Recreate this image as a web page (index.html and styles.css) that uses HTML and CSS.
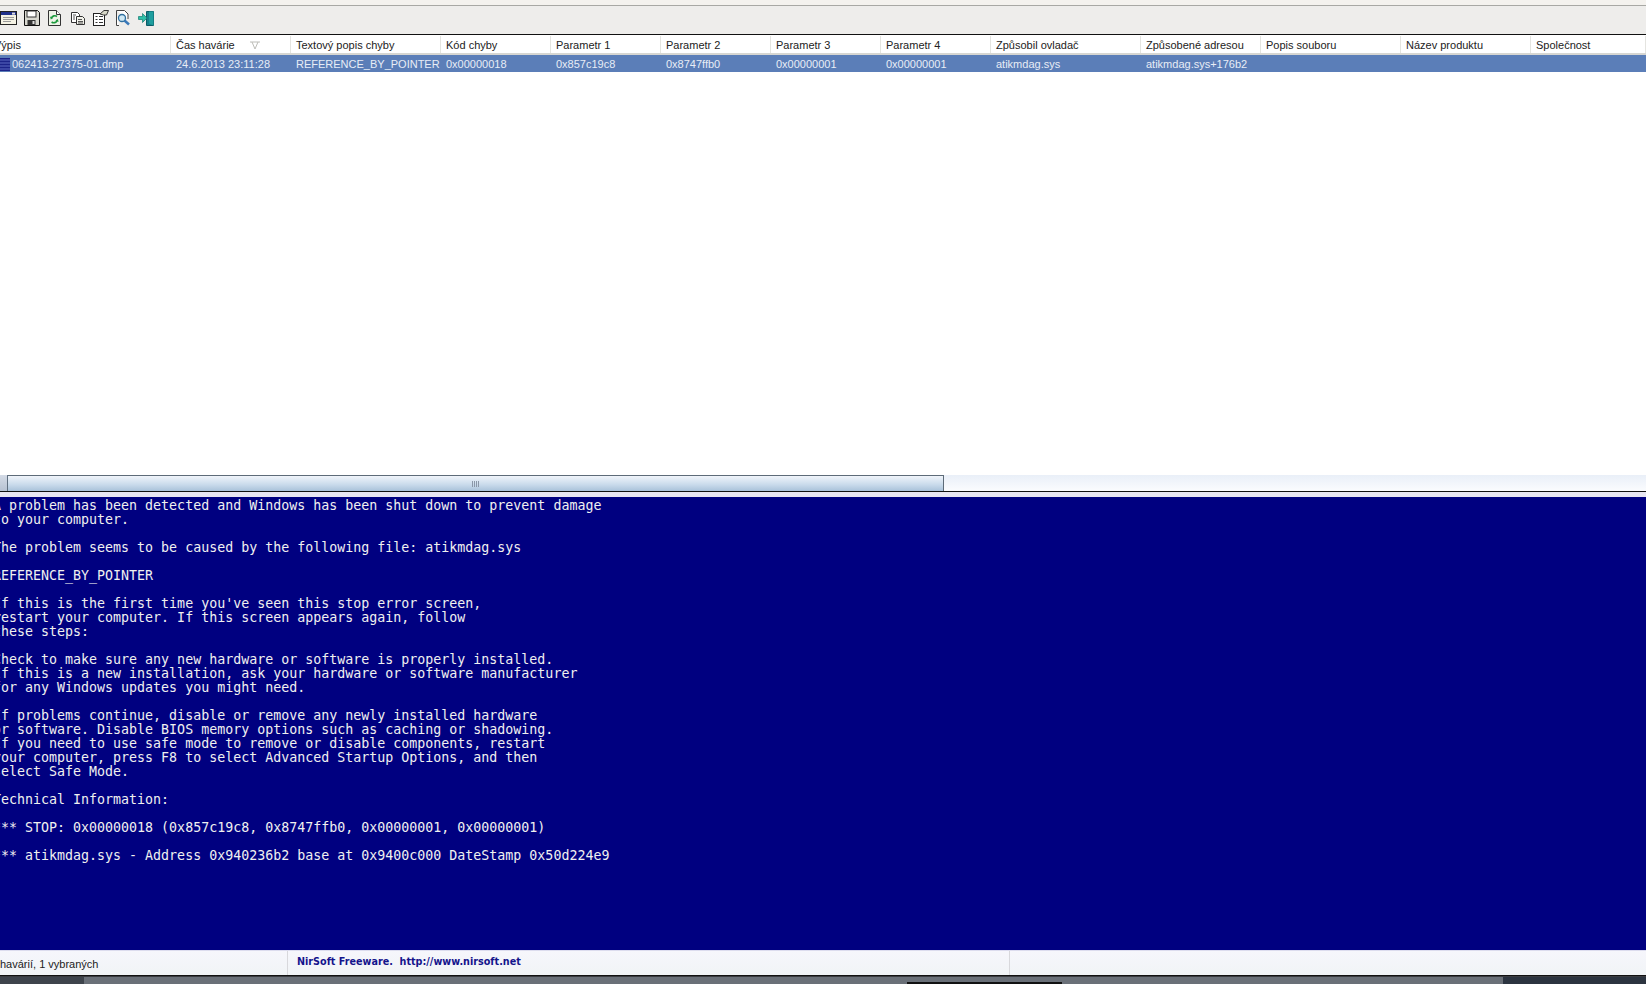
FILE: index.html
```html
<!DOCTYPE html>
<html lang="cs">
<head>
<meta charset="utf-8">
<title>BlueScreenView</title>
<link rel="stylesheet" href="styles.css">
</head>
<body>
<div class="app">
  <div class="menu-strip"></div>
  <div class="toolbar">
    <svg class="tool" viewBox="0 0 17 16"><rect x="0.5" y="1.5" width="16" height="13" fill="#f4f2e4" stroke="#222"/><rect x="1" y="2" width="15" height="3" fill="#20308a"/><rect x="12" y="2.6" width="3" height="2" fill="#ddd"/><path d="M3 7.5h11M3 9.5h11M3 11.5h8" stroke="#999" stroke-width="1"/></svg>
    <svg class="tool" viewBox="0 0 17 16"><path d="M1.5 0.500h13l2 2v13h-15z" fill="#d8d8d0" stroke="#111"/><rect x="4" y="1" width="9" height="6" fill="#fff" stroke="#333"/><rect x="4.500" y="10" width="8" height="5" fill="#333"/><rect x="9.500" y="11" width="2" height="3" fill="#ddd"/></svg>
    <svg class="tool" viewBox="0 0 17 16"><path d="M2.500 0.500h8l4 4v11h-12z" fill="#eef4e8" stroke="#333"/><path d="M10.500 .5v4h4" fill="#fff" stroke="#333"/><path d="M11 6.500a3.600 3.600 0 0 0-5.600 1.600M5.600 12a3.600 3.600 0 0 0 5.600-1.600" fill="none" stroke="#1c9a3c" stroke-width="1.600"/><path d="M4 6.500l.8 3 2.400-1.600zM12.600 12l-.8-3-2.400 1.600z" fill="#1c9a3c"/></svg>
    <svg class="tool" viewBox="0 0 17 16"><path d="M2.500 2.500h6l2 2v8h-8z" fill="#fff" stroke="#333"/><path d="M7.500 6.500h6l2 2v6h-8z" fill="#f2f2ea" stroke="#333"/><path d="M4 5h3M4 7h2M4 9h2M9 9.500h4M9 11.500h5M9 13h5" stroke="#555"/></svg>
    <svg class="tool" viewBox="0 0 17 16"><rect x="1.500" y="3.500" width="11" height="12" fill="#fff" stroke="#222"/><path d="M3.500 6.500h2M7 6.500h4M3.500 9.500h2M7 9.500h4M3.500 12.500h2M7 12.500h4" stroke="#333"/><path d="M8 4l4-3.500h4.500l-2 4.500h-3z" fill="#d8d8c8" stroke="#333"/></svg>
    <svg class="tool" viewBox="0 0 17 16"><path d="M1.500 0.500h8l3.500 3.500v5M4 15.500H1.500v-15" fill="#fff" stroke="#444"/><circle cx="7" cy="8" r="3.500" fill="#cfe8f4" stroke="#2f6f9f" stroke-width="1.300"/><path d="M9.500 10.500l4.500 4" stroke="#3a78b8" stroke-width="2.500"/></svg>
    <svg class="tool" viewBox="0 0 17 16"><path d="M8.500 1.500h7v14h-7z" fill="#16808a" stroke="#0d5c66"/><path d="M11 1.500l4.500 0v14l-4.500-2z" fill="#1f9f9f"/><path d="M0.500 6.500h4v-3l4.500 4.500-4.500 4.500v-3h-4z" fill="#2ec0a8" stroke="#147a70" stroke-width=".7"/></svg>
  </div>

  <section class="list">
    <div class="list-head">
      <div class="head-cell first"><span class="head-clip">Výpis</span></div>
      <div class="head-cell sorted">Čas havárie<svg class="sort" viewBox="0 0 10 9"><path d="M0 1h10M2 1l3 7M8 1L5 8" fill="none" stroke="#bdbdb8"/></svg></div>
      <div class="head-cell">Textový popis chyby</div>
      <div class="head-cell">Kód chyby</div>
      <div class="head-cell">Parametr 1</div>
      <div class="head-cell">Parametr 2</div>
      <div class="head-cell">Parametr 3</div>
      <div class="head-cell">Parametr 4</div>
      <div class="head-cell">Způsobil ovladač</div>
      <div class="head-cell">Způsobené adresou</div>
      <div class="head-cell">Popis souboru</div>
      <div class="head-cell">Název produktu</div>
      <div class="head-cell">Společnost</div>
    </div>
    <div class="list-row">
      <div class="cell file"><svg class="dump" viewBox="0 0 10 14"><rect width="10" height="13" y="1" fill="#1c2488"/><path d="M0 3h10M0 6h10M0 9h10M0 12h10" stroke="#5a68c0"/></svg>062413-27375-01.dmp</div>
      <div class="cell">24.6.2013 23:11:28</div>
      <div class="cell">REFERENCE_BY_POINTER</div>
      <div class="cell">0x00000018</div>
      <div class="cell">0x857c19c8</div>
      <div class="cell">0x8747ffb0</div>
      <div class="cell">0x00000001</div>
      <div class="cell">0x00000001</div>
      <div class="cell">atikmdag.sys</div>
      <div class="cell">atikmdag.sys+176b2</div>
      <div class="cell"></div>
      <div class="cell"></div>
      <div class="cell"></div>
    </div>
  </section>

  <div class="hscroll">
    <div class="arrow"></div>
    <div class="thumb"><span class="grip"></span></div>
  </div>
  <div class="splitter"></div>

  <pre class="bsod">A problem has been detected and Windows has been shut down to prevent damage
to your computer.

The problem seems to be caused by the following file: atikmdag.sys

REFERENCE_BY_POINTER

If this is the first time you've seen this stop error screen,
restart your computer. If this screen appears again, follow
these steps:

Check to make sure any new hardware or software is properly installed.
If this is a new installation, ask your hardware or software manufacturer
for any Windows updates you might need.

If problems continue, disable or remove any newly installed hardware
or software. Disable BIOS memory options such as caching or shadowing.
If you need to use safe mode to remove or disable components, restart
your computer, press F8 to select Advanced Startup Options, and then
select Safe Mode.

Technical Information:

*** STOP: 0x00000018 (0x857c19c8, 0x8747ffb0, 0x00000001, 0x00000001)

*** atikmdag.sys - Address 0x940236b2 base at 0x9400c000 DateStamp 0x50d224e9</pre>

  <div class="status">
    <div class="status-count">havárií, 1 vybraných</div>
    <div class="status-link">NirSoft Freeware.  http://www.nirsoft.net</div>
    <div class="status-rest"></div>
  </div>
  <div class="desk">
    <span class="desk-a"></span>
    <span class="desk-b"><i></i></span>
    <span class="desk-c"></span>
  </div>
</div>
</body>
</html>
```
FILE: styles.css
```css
* { box-sizing: border-box; }
html, body { margin: 0; padding: 0; height: 100%; overflow: hidden; background: #fff; }
.app {
  width: 1646px;
  height: 984px;
  display: flex;
  flex-direction: column;
  font-family: "Liberation Sans", Arial, sans-serif;
  overflow: hidden;
}
.menu-strip {
  height: 6px;
  flex: none;
  background: #f4f2ee;
  border-bottom: 1px solid #a8a8a4;
}
.toolbar {
  height: 29px;
  flex: none;
  display: flex;
  gap: 6px;
  padding-top: 4px;
  background: #eeedeb;
  border-bottom: 1px solid #111;
}
.tool { width: 17px; height: 16px; flex: none; }

.list { flex: 1; background: #fff; display: flex; flex-direction: column; min-height: 0; }
.list-head, .list-row {
  display: grid;
  grid-template-columns: 171px 120px 150px 110px 110px 110px 110px 110px 150px 120px 140px 130px 115px;
  flex: none;
  font-size: 11px;
  white-space: nowrap;
}
.list-head {
  height: 20px;
  color: #222;
  background: #fff;
  border-bottom: 2px solid #d6d6d2;
}
.head-cell {
  padding: 2px 0 0 5px;
  line-height: 15px;
  margin: 1px 0 1px;
  border-right: 1px solid #e4e4e0;
  display: flex;
  align-items: center;
}
.head-cell.first { padding-left: 0; }
.head-clip { margin-left: -6px; }
.sort { width: 10px; height: 9px; margin-left: 15px; }
.list-row {
  height: 17px;
  line-height: 18px;
  color: #e8edf6;
  background: #5b7eb8;
}
.cell { padding-left: 5px; overflow: hidden; }
.cell.file { padding-left: 0; display: flex; align-items: center; gap: 2px; }
.dump { width: 10px; height: 14px; flex: none; }

.hscroll {
  height: 17px;
  flex: none;
  display: flex;
  background: linear-gradient(#e9eff8, #fbfcfe);
  border-bottom: 1px solid #111;
}
.arrow { width: 8px; background: linear-gradient(#d4dbe6, #b6c2d2); border-right: 1px solid #5f6f80; }
.thumb {
  width: 936px;
  display: flex;
  align-items: center;
  justify-content: center;
  background: linear-gradient(#f0f4fa, #cbdcec 55%, #a9c2da);
  border: 1px solid #5d6b78;
  border-left-width: 0;
  border-bottom-width: 0;
}
.grip {
  width: 8px;
  height: 6px;
  background: repeating-linear-gradient(90deg, #8a97a8 0 1px, transparent 1px 2px);
}
.splitter { height: 5px; flex: none; background: #e8e6f2; }

.bsod {
  flex: none;
  height: 453px;
  margin: 0 0 0 -7px;
  padding: 2px 0 0 0;
  background: #000080;
  color: #f0f0f0;
  font-family: "DejaVu Sans Mono", "Liberation Mono", monospace;
  font-size: 13.3px;
  line-height: 14px;
  overflow: hidden;
}
.status {
  height: 26px;
  flex: none;
  display: flex;
  background: linear-gradient(#f6f6fc, #f1f4f6);
  border-top: 1px solid #dcdcee;
  border-bottom: 1px solid #111;
}
.status-count {
  width: 288px;
  padding: 6px 0 0 0;
  font-size: 11px;
  line-height: 14px;
  color: #222;
  border-right: 1px solid #d8d8dc;
}
.status-link {
  width: 722px;
  padding: 4px 0 0 9px;
  font-family: "DejaVu Sans", sans-serif;
  font-size: 9.65px;
  font-weight: 700;
  line-height: 14px;
  white-space: pre;
  color: #14148c;
  border-right: 1px solid #d8d8dc;
}
.status-rest { flex: 1; }
.desk {
  flex: none;
  height: 8px;
  display: flex;
  background: #6a7078;
  border-top: 1px solid #3a3c40;
}
.desk-a { width: 84px; background: #3e444c; }
.desk-b { width: 1419px; display: flex; padding: 5px 441px 0 823px; }
.desk-b i { flex: 1; background: #111; }
.desk-c { flex: 1; background: #2c3440; }
```
